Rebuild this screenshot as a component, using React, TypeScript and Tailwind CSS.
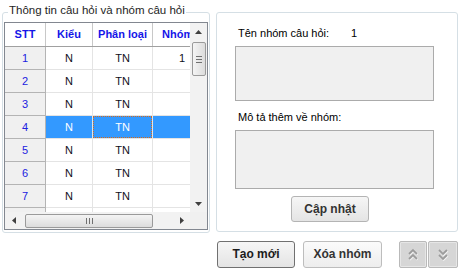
import type { ReactNode } from "react";

const rows = [1, 2, 3, 4, 5, 6, 7];

function Arrow({ dir }: { dir: "up" | "down" | "left" | "right" }) {
  const pts =
    dir === "up"
      ? "0,4 7,4 3.5,0"
      : dir === "down"
        ? "0,0 7,0 3.5,4"
        : dir === "left"
          ? "4,0 4,7 0,3.5"
          : "0,0 0,7 4,3.5";
  const w = dir === "up" || dir === "down" ? 7 : 4;
  const h = dir === "up" || dir === "down" ? 4 : 7;
  return (
    <svg width={w} height={h} viewBox={`0 0 ${w} ${h}`}>
      <polygon points={pts} fill="#404040" />
    </svg>
  );
}

function Chevrons({ up }: { up?: boolean }) {
  const a = up ? "M3 6 L7 2 L11 6 M3 11 L7 7 L11 11" : "M3 2 L7 6 L11 2 M3 7 L7 11 L11 7";
  return (
    <svg width="14" height="13" viewBox="0 0 14 13">
      <path d={a} fill="none" stroke="#f4f4f4" strokeWidth="2.2" transform="translate(0.6,0.6)" />
      <path d={a} fill="none" stroke="#9c9c9c" strokeWidth="1.8" />
    </svg>
  );
}

function Btn({ children, className = "" }: { children: ReactNode; className?: string }) {
  return (
    <button
      type="button"
      className={`flex items-center justify-center rounded-[3px] border bg-gradient-to-b from-[#f6f6f6] to-[#e4e4e4] text-[12px] font-bold text-[#1c1c1c] ${className}`}
    >
      {children}
    </button>
  );
}

export default function App() {
  return (
    <div className="flex h-[272px] w-[461px] flex-col bg-white pl-[2px] pt-[12px] font-['Liberation_Sans',Arial,sans-serif] text-[11px] leading-[13px] text-black">
      <div className="flex gap-[6px]">
        {/* Left group box */}
        <div className="relative h-[221px] w-[208px] rounded-[3px] border border-[#d5dfe5] pl-[1px] pt-[9px]">
          <span className="absolute left-[5px] top-[-9px] bg-white px-[1px] text-[11.5px] text-[#1e1e1e]">
            Thông tin câu hỏi và nhóm câu hỏi
          </span>

          <div className="flex h-[208px] w-[204px] flex-col border border-[#828790] bg-white">
            <div className="flex h-[189px]">
              {/* table */}
              <div className="w-[185px] overflow-hidden">
                <div className="flex h-[24px] border-b border-[#a0a0a0] font-bold text-[#1515e8]">
                  <div className="flex w-[41px] items-center justify-center border-r border-[#c8c8c8]">STT</div>
                  <div className="flex w-[47px] items-center justify-center border-r border-[#c8c8c8]">Kiểu</div>
                  <div className="flex w-[60px] items-center justify-center border-r border-[#c8c8c8]">Phân loại</div>
                  <div className="flex w-[37px] items-center overflow-hidden whitespace-nowrap pl-[9px]">Nhóm</div>
                </div>
                {rows.map((n) => {
                  const sel = n === 4;
                  return (
                    <div key={n} className="flex h-[23px]">
                      <div className="flex w-[41px] items-center justify-center border-b border-r border-[#b4b4b4] bg-[#f0f0f0] text-[#2020e0]">
                        {n}
                      </div>
                      <div
                        className={`flex w-[47px] items-center justify-center border-b border-r border-[#e4e4e4] ${sel ? "bg-[#3399ff] text-white" : "text-[#101020]"}`}
                      >
                        N
                      </div>
                      <div
                        className={`flex w-[60px] items-center justify-center border-b border-r border-[#e4e4e4] ${sel ? "bg-[#3399ff] text-white" : "text-[#101020]"}`}
                      >
                        {sel ? (
                          <div className="flex h-full w-full items-center justify-center border border-dotted border-[#d2691e]">
                            TN
                          </div>
                        ) : (
                          "TN"
                        )}
                      </div>
                      <div
                        className={`flex w-[37px] items-center justify-end border-b border-[#e4e4e4] pr-[5px] ${sel ? "bg-[#3399ff] text-white" : "text-[#101020]"}`}
                      >
                        {n === 1 ? "1" : ""}
                      </div>
                    </div>
                  );
                })}
                <div className="flex h-[4px]">
                  <div className="w-[41px] border-r border-[#b4b4b4] bg-[#f0f0f0]" />
                  <div className="w-[47px] border-r border-[#e4e4e4]" />
                  <div className="w-[60px] border-r border-[#e4e4e4]" />
                </div>
              </div>

              {/* vertical scrollbar */}
              <div className="flex w-[17px] flex-col items-center bg-[#f2f2f2]">
                <div className="flex h-[17px] w-full items-center justify-center">
                  <Arrow dir="up" />
                </div>
                <div className="ml-[1px] mt-[2px] flex h-[34px] w-[14px] flex-col items-center justify-center gap-[2px] rounded-[2px] border border-[#9a9a9a] bg-gradient-to-r from-[#f4f4f4] to-[#dcdcdc]">
                  <div className="h-px w-[6px] bg-[#707070]" />
                  <div className="h-px w-[6px] bg-[#707070]" />
                  <div className="h-px w-[6px] bg-[#707070]" />
                </div>
                <div className="flex-1" />
                <div className="flex h-[17px] w-full items-center justify-center">
                  <Arrow dir="down" />
                </div>
              </div>
            </div>

            {/* horizontal scrollbar */}
            <div className="flex h-[17px]">
              <div className="flex w-[185px] items-center bg-[#f2f2f2]">
                <div className="flex w-[17px] items-center justify-center">
                  <Arrow dir="left" />
                </div>
                <div className="ml-[3px] flex h-[14px] w-[128px] items-center justify-center gap-[2px] rounded-[2px] border border-[#9a9a9a] bg-gradient-to-b from-[#f4f4f4] to-[#dcdcdc]">
                  <div className="h-[6px] w-px bg-[#707070]" />
                  <div className="h-[6px] w-px bg-[#707070]" />
                  <div className="h-[6px] w-px bg-[#707070]" />
                </div>
                <div className="flex-1" />
                <div className="flex w-[17px] items-center justify-center">
                  <Arrow dir="right" />
                </div>
              </div>
              <div className="w-[17px] bg-[#f0f0f0]" />
            </div>
          </div>
        </div>

        {/* Right group box */}
        <div className="flex h-[220px] w-[242px] flex-col rounded-[3px] border border-[#d5dfe5] pl-[18px] pt-[14px]">
          <div className="flex pl-[3px]">
            <span className="w-[113px]">Tên nhóm câu hỏi:</span>
            <span>1</span>
          </div>
          <div className="mt-[6px] h-[55px] w-[199px] border border-[#ababab] bg-[#f0f0f0]" />
          <div className="mt-[10px] pl-[3px]">Mô tả thêm về nhóm:</div>
          <div className="mt-[6px] h-[59px] w-[199px] border border-[#ababab] bg-[#f0f0f0]" />
          <Btn className="ml-[56px] mt-[7px] h-[26px] w-[78px] border-[#b4b4b4] text-[#333]">Cập nhật</Btn>
        </div>
      </div>

      {/* Bottom buttons */}
      <div className="ml-[215px] mt-[8px] flex h-[27px]">
        <Btn className="h-[27px] w-[78px] border-[#707070] from-[#f2f2f2] to-[#d9d9d9]">Tạo mới</Btn>
        <Btn className="ml-[8px] h-[27px] w-[79px] border-[#bdbdbd] from-[#fbfbfb] to-[#ededed] text-[#333]">Xóa nhóm</Btn>
        <div className="ml-[17px] flex gap-[1px]">
          <div className="flex h-[27px] w-[28px] items-center justify-center rounded-[2px] border border-[#b9b9b9] bg-[#d6d6d6] shadow-[inset_0_0_0_1px_#e6e6e6]">
            <Chevrons up />
          </div>
          <div className="flex h-[27px] w-[30px] items-center justify-center rounded-[2px] border border-[#b9b9b9] bg-[#d6d6d6] shadow-[inset_0_0_0_1px_#e6e6e6]">
            <Chevrons />
          </div>
        </div>
      </div>
    </div>
  );
}
